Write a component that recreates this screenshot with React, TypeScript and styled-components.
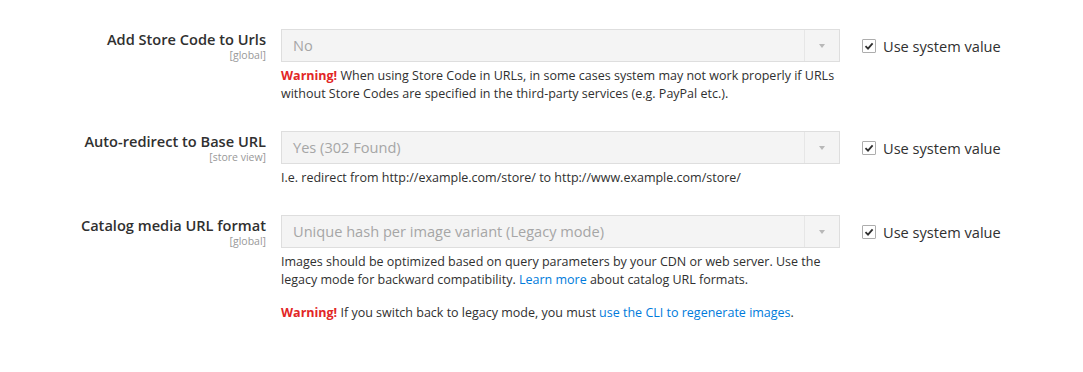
import React from "react";
import styled, { createGlobalStyle } from "styled-components";

const GlobalStyle = createGlobalStyle`
  body {
    margin: 0;
    background: #fff;
    font-family: "Open Sans", "Liberation Sans", sans-serif;
    color: #303030;
  }
`;

const fields = [
  {
    label: "Add Store Code to Urls",
    scope: "[global]",
    value: "No",
  },
  {
    label: "Auto-redirect to Base URL",
    scope: "[store view]",
    value: "Yes (302 Found)",
  },
  {
    label: "Catalog media URL format",
    scope: "[global]",
    value: "Unique hash per image variant (Legacy mode)",
  },
];

const Check = () => (
  <svg width="10" height="10" viewBox="0 0 10 10">
    <path d="M1.5 5.2 L4 7.6 L8.6 2.4" fill="none" stroke="#303030" strokeWidth="1.8" />
  </svg>
);

const App = () => {
  return (
    <>
      <GlobalStyle />
      <Page>
        {fields.map((f, i) => (
          <Row key={i}>
            <LabelCol>
              <Label>{f.label}</Label>
              <Scope>{f.scope}</Scope>
            </LabelCol>
            <Control>
              <Select>
                <SelectValue>{f.value}</SelectValue>
                <Arrow />
              </Select>
              {i === 0 && (
                <Note>
                  <Warn>Warning!</Warn> When using Store Code in URLs, in some cases system may not work
                  properly if URLs without Store Codes are specified in the third-party services (e.g.
                  PayPal etc.).
                </Note>
              )}
              {i === 1 && (
                <Note>I.e. redirect from http://example.com/store/ to http://www.example.com/store/</Note>
              )}
              {i === 2 && (
                <Note>
                  <p>
                    Images should be optimized based on query parameters by your CDN or web server. Use the
                    legacy mode for backward compatibility. <Link>Learn more</Link> about catalog URL
                    formats.
                  </p>
                  <p>
                    <Warn>Warning!</Warn> If you switch back to legacy mode, you must{" "}
                    <Link>use the CLI to regenerate images</Link>.
                  </p>
                </Note>
              )}
            </Control>
            <UseSystem>
              <Box>
                <Check />
              </Box>
              Use system value
            </UseSystem>
          </Row>
        ))}
      </Page>
    </>
  );
};

export default App;

const Page = styled.div`
  padding-top: 29px;
  display: flex;
  flex-direction: column;
  gap: 28px;
`;

const Row = styled.div`
  display: flex;
  align-items: flex-start;
`;

const LabelCol = styled.div`
  width: 266px;
  flex-shrink: 0;
  text-align: right;
  padding-top: 1px;
`;

const Label = styled.div`
  font-size: 14.6px;
  font-weight: 600;
  line-height: 19px;
  color: #303030;
`;

const Scope = styled.div`
  font-size: 10.5px;
  line-height: 13px;
  color: #999;
`;

const Control = styled.div`
  width: 559px;
  margin-left: 15px;
  flex-shrink: 0;
`;

const Select = styled.div`
  height: 33px;
  box-sizing: border-box;
  border: 1px solid #dedede;
  background: #f4f4f4;
  display: flex;
  align-items: stretch;
`;

const SelectValue = styled.div`
  flex: 1;
  padding-left: 11px;
  font-size: 14.6px;
  line-height: 31px;
  color: #a6a6a6;
`;

const Arrow = styled.div`
  width: 34px;
  border-left: 1px solid #e6e6e6;
  position: relative;
  &::after {
    content: "";
    position: absolute;
    left: 14px;
    top: 14px;
    border-left: 3px solid transparent;
    border-right: 3px solid transparent;
    border-top: 4px solid #b8b8b8;
  }
`;

const Note = styled.div`
  margin-top: 5px;
  font-size: 12.5px;
  line-height: 18px;
  color: #303030;
  p {
    margin: 0 0 15px;
  }
  p:last-child {
    margin-bottom: 0;
  }
`;

const Warn = styled.strong`
  color: #e22626;
  font-weight: 700;
`;

const Link = styled.span`
  color: #007bdb;
`;

const UseSystem = styled.label`
  margin-left: 22px;
  margin-top: 8px;
  display: flex;
  align-items: center;
  gap: 7px;
  font-size: 14.6px;
  line-height: 18px;
  color: #303030;
`;

const Box = styled.span`
  width: 14px;
  height: 14px;
  box-sizing: border-box;
  border: 1px solid #adadad;
  border-radius: 1px;
  background: #fff;
  display: flex;
  align-items: center;
  justify-content: center;
`;
